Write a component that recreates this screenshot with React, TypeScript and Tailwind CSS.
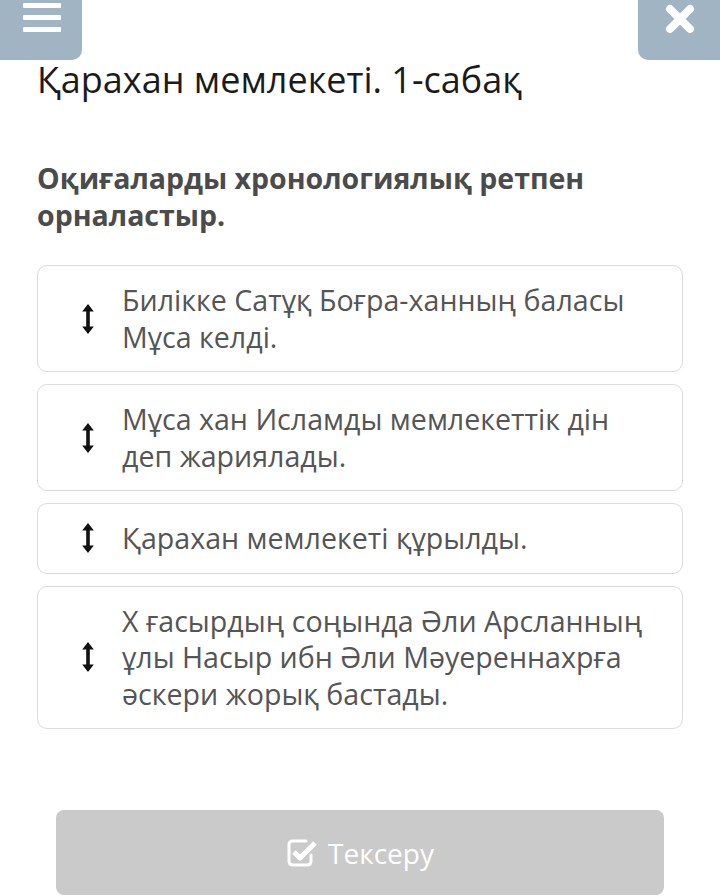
import React from "react";

const items = [
	"Билікке Сатұқ Боғра-ханның баласы Мұса келді.",
	"Мұса хан Исламды мемлекеттік дін деп жариялады.",
	"Қарахан мемлекеті құрылды.",
	"X ғасырдың соңында Әли Арсланның ұлы Насыр ибн Әли Мәуереннахрға әскери жорық бастады.",
];

const ArrowsV = () => (
	<svg width="12" height="30" viewBox="0 0 12 30" className="shrink-0">
		<path d="M6 0 L11.8 7.5 L7.8 7.5 L7.8 22.5 L11.8 22.5 L6 30 L0.2 22.5 L4.2 22.5 L4.2 7.5 L0.2 7.5 Z" fill="#111" />
	</svg>
);

const CheckSquare = () => (
	<svg width="32" height="30" viewBox="0 0 32 30" className="shrink-0">
		<path
			d="M20 3 H7 Q3 3 3 7 V23 Q3 27 7 27 H21 Q25 27 25 23 V17"
			fill="none"
			stroke="white"
			strokeWidth="3"
			strokeLinecap="round"
		/>
		<path d="M8 14 L14 20 L29 5" fill="none" stroke="white" strokeWidth="5" strokeLinejoin="round" />
	</svg>
);

const Card = ({ text }: { text: string }) => (
	<div className="flex items-center border border-[#dcdcdc] rounded-[10px] py-[16px] pl-[44px] pr-[24px] cursor-move">
		<ArrowsV />
		<p className="ml-[28px] text-[28.6px] leading-[36.5px] text-[#555]">{text}</p>
	</div>
);

export default function App() {
	return (
		<div
			className="w-[720px] h-[896px] overflow-hidden bg-white"
			style={{ fontFamily: '"Open Sans", "Noto Sans", sans-serif' }}
		>
			<div className="flex justify-between">
				<button className="w-[82px] h-[60px] bg-[#a1b4c4] rounded-br-[10px] flex flex-col items-center pt-[3px] gap-[7px] pl-[1px]">
					<span className="block w-[38px] h-[5px] bg-white rounded-[1px]" />
					<span className="block w-[38px] h-[5px] bg-white rounded-[1px]" />
					<span className="block w-[38px] h-[5px] bg-white rounded-[1px]" />
				</button>
				<button className="w-[82px] h-[60px] bg-[#a1b4c4] rounded-bl-[10px] flex justify-center pt-[4px] pl-[1px]">
					<svg width="30" height="30" viewBox="0 0 30 30">
						<path d="M5 5 L25 25 M25 5 L5 25" stroke="white" strokeWidth="8" strokeLinecap="round" />
					</svg>
				</button>
			</div>
			<div className="px-[37px]">
				<h1 className="text-[36px] leading-[40px] text-[#1b1b1b]">Қарахан мемлекеті. 1-сабақ</h1>
				<h2 className="mt-[60px] text-[28.5px] leading-[37px] font-bold text-[#4b4b4b]">
					Оқиғаларды хронологиялық ретпен орналастыр.
				</h2>
				<div className="mt-[31px] flex flex-col gap-[12px] w-[646px]">
					{items.map((t) => (
						<Card key={t} text={t} />
					))}
				</div>
			</div>
			<div className="px-[56px] mt-[81px]">
				<button className="w-[608px] h-[85px] bg-[#cacaca] rounded-[8px] flex items-center justify-center gap-[10px] text-white text-[28px]">
					<CheckSquare />
					<span>Тексеру</span>
				</button>
			</div>
		</div>
	);
}
